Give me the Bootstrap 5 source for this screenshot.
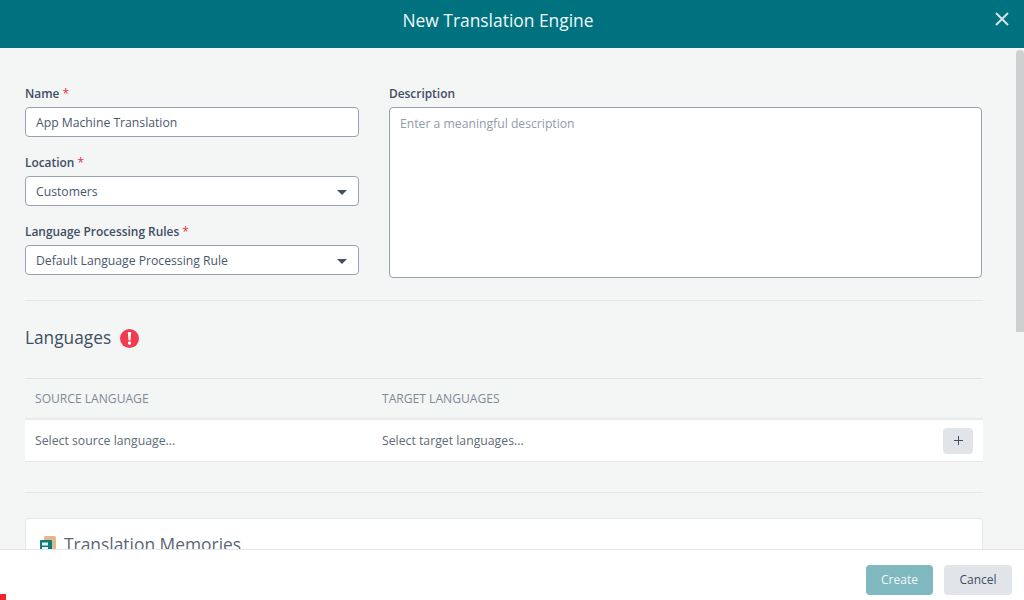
<!DOCTYPE html>
<html lang="en">
<head>
<meta charset="utf-8">
<title>New Translation Engine</title>
<link href="https://cdn.jsdelivr.net/npm/bootstrap@5.3.0/dist/css/bootstrap.min.css" rel="stylesheet">
<style>
html,body{height:100%;overflow:hidden}
body{font-family:"Open Sans","Noto Sans",sans-serif;font-size:12px;color:#414e63;background:#fff}
.shell{height:600px;position:relative}
.topbar{height:48px;background:#00727f;color:#fff;flex:none;padding-right:28px}
.topbar h1{font-size:17.4px;font-weight:500;margin:0;line-height:40px;color:#f2f8f8}
.closer{position:absolute;right:14px;top:11px;width:16px;height:16px;border:0;background:none;padding:0;line-height:0}
.scrollarea{flex:1 1 0;min-height:0;background:#f4f5f5;overflow:hidden;position:relative;padding:38px 41px 0 25px}
.thumb{position:absolute;right:0;top:2px;width:8px;height:282px;border-radius:4px 4px 0 0;background:#cdcfd0}
.lab{font-size:11.9px;font-weight:600;color:#414e63;line-height:14px;margin-bottom:7px;display:block}
.req{color:#e8323f;font-weight:400}
.fld{height:30px;border:1px solid #9aa0ae;border-radius:4px;background:#fff;padding:2px 11px 0 10px;font-size:12.2px;color:#4b586b;display:flex;align-items:center;justify-content:space-between;margin-bottom:18px}
.fld:last-child{margin-bottom:0}
.caret{width:0;height:0;border-left:5.5px solid transparent;border-right:5.5px solid transparent;border-top:5.5px solid #414e63}
.leftcol{width:334px;flex:none}
.rightcol{width:593px;flex:none;margin-left:30px}
.desc{height:171px;border:1px solid #9aa0ae;border-radius:4px;background:#fff;padding:9px 10px;color:#8f9cab;line-height:14px;font-size:12.2px}
.rule{border-top:1px solid #e6e8e8;height:0;width:958px}
.head2{font-size:17.3px;font-weight:400;color:#414e63;margin:0;line-height:24px}
.alert-dot{width:19px;height:19px;border-radius:50%;background:#f03c4e;color:#fff;margin-left:9px;flex:none}
.grid-head{width:958px;height:42px;border-top:1px solid #e1e3e4;border-bottom:2px solid #e9ebeb;color:#7e8a98;font-size:12.1px;padding:2px 0 0 10px}
.grid-row{width:958px;height:42px;background:#fff;border-bottom:1px solid #e4e6e7;color:#5f6b78;font-size:12.25px;padding:0 10px}
.grid-row span{padding-top:2px}
.c1{width:347px;flex:none}
.plusbtn{width:30px;height:26px;background:#e1e5ea;border:0;border-radius:4px;padding:0;line-height:0}
.tmcard{width:958px;height:120px;background:#fff;border:1px solid #e6e8e9;border-radius:4px;padding:14px 14px}
.tmcard h3{font-size:17.4px;font-weight:400;color:#5a6776;margin:-1px 0 0 8px;line-height:24px}
.bottombar{height:51px;flex:none;background:#fff;border-top:1px solid #e4e6e7;padding:15px 12px 0 0;position:relative;z-index:2}
.act{height:30px;border:0;border-radius:4px;font-size:12px;line-height:30px;padding:0;font-weight:500}
.act-create{width:67px;background:#7fb8bf;color:#f1f8f8;margin-right:11px}
.act-cancel{width:68px;background:#e1e5ea;color:#414e63}
.mark-corner{position:absolute;left:0;bottom:0;width:6px;height:6px;background:#f5222d;z-index:3}
.gap-a{margin-top:22px}
.gap-b{margin-top:25px;margin-bottom:28px}
.gap-c{margin-top:30px}
.gap-d{margin-top:25px}
</style>
</head>
<body>
<div class="shell d-flex flex-column">
  <div class="topbar text-center"><h1>New Translation Engine</h1></div>
  <button class="closer" aria-label="Close"><svg width="16" height="16" viewBox="0 0 16 16"><path d="M2 2 14 14M14 2 2 14" stroke="#cfe5e8" stroke-width="2" fill="none"/></svg></button>
  <div class="scrollarea">
    <div class="thumb"></div>
    <div class="d-flex">
      <div class="leftcol">
        <label class="lab">Name <span class="req">*</span></label>
        <div class="fld">App Machine Translation</div>
        <label class="lab">Location <span class="req">*</span></label>
        <div class="fld"><span>Customers</span><span class="caret"></span></div>
        <label class="lab">Language Processing Rules <span class="req">*</span></label>
        <div class="fld"><span>Default Language Processing Rule</span><span class="caret"></span></div>
      </div>
      <div class="rightcol">
        <label class="lab">Description</label>
        <div class="desc">Enter a meaningful description</div>
      </div>
    </div>
    <div class="rule gap-a"></div>
    <div class="d-flex align-items-center gap-b">
      <h2 class="head2">Languages</h2>
      <span class="alert-dot d-flex align-items-center justify-content-center"><svg width="5" height="13" viewBox="0 0 5 13"><path d="M.8 0h3.4L3.5 8.2h-2z" fill="#fff"/><circle cx="2.5" cy="11" r="1.7" fill="#fff"/></svg></span>
    </div>
    <div class="grid-head d-flex align-items-center"><span class="c1">SOURCE LANGUAGE</span><span>TARGET LANGUAGES</span></div>
    <div class="grid-row d-flex align-items-center"><span class="c1">Select source language...</span><span class="flex-grow-1">Select target languages...</span><button class="plusbtn" aria-label="Add"><svg width="9" height="9" viewBox="0 0 9 9"><path d="M4.5 0v9M0 4.5h9" stroke="#414e63" stroke-width="1" fill="none"/></svg></button></div>
    <div class="rule gap-c"></div>
    <div class="tmcard gap-d">
      <div class="d-flex align-items-center">
        <svg width="16" height="17" viewBox="0 0 16 17"><rect x="4" y="0" width="12" height="16" rx="1.5" fill="#e2b98c"/><rect x="0" y="4" width="12" height="13" rx="1" fill="#0f7b79"/><rect x="2" y="6.5" width="6" height="3" fill="#e6f3f2"/><rect x="2" y="11" width="6" height="3" fill="#e6f3f2"/></svg>
        <h3>Translation Memories</h3>
      </div>
    </div>
  </div>
  <div class="bottombar d-flex justify-content-end align-items-start">
    <button class="act act-create">Create</button>
    <button class="act act-cancel">Cancel</button>
  </div>
  <div class="mark-corner"></div>
</div>
<script src="https://cdn.jsdelivr.net/npm/bootstrap@5.3.0/dist/js/bootstrap.bundle.min.js"></script>
</body>
</html>
